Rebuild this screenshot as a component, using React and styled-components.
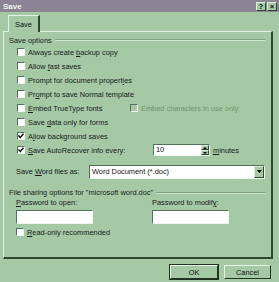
import React from "react";
import styled, { createGlobalStyle } from "styled-components";

const Global = createGlobalStyle`
  html, body { margin: 0; padding: 0; background: #a4c9a4; }
  body { font-family: "Liberation Sans", Arial, sans-serif; font-size: 7.4px; color: #1a1a1a; }
`;

const Win = styled.div`
  width: 279px;
  height: 282px;
  background: #a4c9a4;
  display: flex;
  flex-direction: column;
  overflow: hidden;
`;

const TitleBar = styled.div`
  height: 12px;
  background: #8b8494;
  display: flex;
  align-items: center;
  justify-content: space-between;
  padding: 0 2px 0 3px;
  color: #f2f2f2;
  font-weight: bold;
  font-size: 8px;
`;

const TitleBtns = styled.div`
  display: flex;
  gap: 1px;
`;

const TitleBtn = styled.div`
  width: 10px;
  height: 9px;
  background: #a4c9a4;
  border: 1px solid;
  border-color: #d8ecd8 #2f4a2f #2f4a2f #d8ecd8;
  box-sizing: border-box;
  color: #000;
  font-size: 7px;
  font-weight: bold;
  display: flex;
  align-items: center;
  justify-content: center;
  line-height: 1;
`;

const Body = styled.div`
  flex: 1;
  padding: 3px 6px 0 3px;
  display: flex;
  flex-direction: column;
`;

const Tabs = styled.div`
  display: flex;
  padding-left: 5px;
  height: 16px;
`;

const Tab = styled.div`
  width: 32px;
  border-left: 1px solid #e2f2e2;
  border-top: 1px solid #e2f2e2;
  border-right: 2px solid #2d472d;
  box-sizing: border-box;
  display: flex;
  align-items: center;
  justify-content: center;
  color: #111;
  margin-bottom: -1px;
  background: #a4c9a4;
  position: relative;
  z-index: 1;
`;

const Panel = styled.div`
  height: 228px;
  border-top: 1px solid #e2f2e2;
  border-left: 1px solid #e2f2e2;
  border-right: 2px solid #2d472d;
  border-bottom: 2px solid #2d472d;
  box-sizing: border-box;
  padding: 3px 6px 0 5px;
  display: flex;
  flex-direction: column;
`;

const Group = styled.div`
  display: flex;
  align-items: center;
  gap: 3px;
  height: ${(p) => p.$h || 10}px;
  white-space: nowrap;
  &::after {
    content: "";
    flex: 1;
    height: 0;
    border-top: 1px solid #7ea27e;
    border-bottom: 1px solid #cfe6cf;
  }
`;

const Rows = styled.div`
  display: flex;
  flex-direction: column;
  padding-left: 8px;
`;

const Row = styled.div`
  display: flex;
  align-items: center;
  height: 14px;
  gap: 3px;
`;

const Box = styled.span`
  width: 8px;
  height: 8px;
  background: ${(p) => (p.$disabled ? "#a4c9a4" : "#fff")};
  border: 1px solid;
  border-color: #52705a #eef8ee #eef8ee #52705a;
  box-sizing: border-box;
  display: inline-flex;
  align-items: center;
  justify-content: center;
  flex: none;
`;

const Label = styled.span`
  color: ${(p) => (p.$disabled ? "#6f956f" : "#1a1a1a")};
  white-space: nowrap;
  width: ${(p) => (p.$w ? `${p.$w}px` : "auto")};
  flex: none;
  u { text-decoration: underline; }
`;

const Check = ({ on, disabled }) => (
  <Box $disabled={disabled}>
    {on && (
      <svg width="6" height="6" viewBox="0 0 6 6">
        <path d="M0.5 2.5 L2.3 4.5 L5.5 0.8" stroke="#000" strokeWidth="1.4" fill="none" />
      </svg>
    )}
  </Box>
);

const Spin = styled.div`
  display: flex;
  width: 57px;
  height: 12px;
  background: #fff;
  border: 1px solid;
  border-color: #52705a #eef8ee #eef8ee #52705a;
  box-sizing: border-box;
`;

const SpinText = styled.span`
  flex: 1;
  padding-left: 2px;
  line-height: 10px;
  color: #111;
`;

const SpinBtns = styled.div`
  width: 8px;
  display: flex;
  flex-direction: column;
`;

const SpinBtn = styled.div`
  flex: 1;
  background: #a4c9a4;
  border: 1px solid;
  border-color: #d8ecd8 #2f4a2f #2f4a2f #d8ecd8;
  box-sizing: border-box;
  display: flex;
  align-items: center;
  justify-content: center;
`;

const AsRow = styled.div`
  display: flex;
  align-items: center;
  margin-top: 7px;
  padding-left: 7px;
  height: 15px;
`;

const Select = styled.div`
  width: 176px;
  height: 14px;
  background: #fff;
  border: 1px solid;
  border-color: #52705a #eef8ee #eef8ee #52705a;
  box-sizing: border-box;
  display: flex;
  align-items: center;
`;

const SelectText = styled.span`
  flex: 1;
  padding-left: 2px;
  color: #111;
`;

const DropBtn = styled.div`
  width: 10px;
  height: 12px;
  background: #a4c9a4;
  border: 1px solid;
  border-color: #d8ecd8 #2f4a2f #2f4a2f #d8ecd8;
  box-sizing: border-box;
  display: flex;
  align-items: center;
  justify-content: center;
`;

const Sharing = styled.div`
  margin-top: 8px;
`;

const PwGrid = styled.div`
  display: grid;
  grid-template-columns: 136px 1fr;
  padding-left: 7px;
`;

const PwCol = styled.div`
  display: flex;
  flex-direction: column;
`;

const Field = styled.div`
  width: ${(p) => p.$w}px;
  height: 14px;
  background: #fff;
  border: 1px solid;
  border-color: #52705a #eef8ee #eef8ee #52705a;
  box-sizing: border-box;
  margin-top: 2px;
`;

const PwLabel = styled.span`
  height: 10px;
  line-height: 10px;
  u { text-decoration: underline; }
`;

const ReadOnly = styled(Row)`
  padding-left: 7px;
  margin-top: 1px;
`;

const Footer = styled.div`
  display: flex;
  justify-content: flex-end;
  gap: 6px;
  padding: 6px 2px 0 0;
`;

const Button = styled.div`
  width: ${(p) => (p.$default ? 48 : 47)}px;
  height: 14px;
  box-sizing: border-box;
  border: 1px solid;
  border-color: #e6f4e6 #1f351f #1f351f #e6f4e6;
  outline: ${(p) => (p.$default ? "1px solid #1f351f" : "none")};
  display: flex;
  align-items: center;
  justify-content: center;
  color: #111;
`;

export default function App() {
  return (
    <Win>
      <Global />
      <TitleBar>
        <span>Save</span>
        <TitleBtns>
          <TitleBtn>?</TitleBtn>
          <TitleBtn>×</TitleBtn>
        </TitleBtns>
      </TitleBar>
      <Body>
        <Tabs>
          <Tab>Save</Tab>
        </Tabs>
        <Panel>
          <Group>Save options</Group>
          <Rows>
            <Row><Check /><Label>Always create <u>b</u>ackup copy</Label></Row>
            <Row><Check /><Label>Allow <u>f</u>ast saves</Label></Row>
            <Row><Check /><Label>Prompt for document propert<u>i</u>es</Label></Row>
            <Row><Check /><Label>Pr<u>o</u>mpt to save Normal template</Label></Row>
            <Row>
              <Check /><Label $w={99}><u>E</u>mbed TrueType fonts</Label>
              <Check disabled /><Label $disabled>Embed characters in use only</Label>
            </Row>
            <Row><Check /><Label>Save <u>d</u>ata only for forms</Label></Row>
            <Row><Check on /><Label>A<u>l</u>low background saves</Label></Row>
            <Row>
              <Check on /><Label $w={122}><u>S</u>ave AutoRecover info every:</Label>
              <Spin>
                <SpinText>10</SpinText>
                <SpinBtns>
                  <SpinBtn>
                    <svg width="4" height="2" viewBox="0 0 4 2"><path d="M0 2 L2 0 L4 2 Z" fill="#000" /></svg>
                  </SpinBtn>
                  <SpinBtn>
                    <svg width="4" height="2" viewBox="0 0 4 2"><path d="M0 0 L2 2 L4 0 Z" fill="#000" /></svg>
                  </SpinBtn>
                </SpinBtns>
              </Spin>
              <Label><u>m</u>inutes</Label>
            </Row>
          </Rows>
          <AsRow>
            <Label $w={73}>Save <u>W</u>ord files as:</Label>
            <Select>
              <SelectText>Word Document (*.doc)</SelectText>
              <DropBtn>
                <svg width="5" height="3" viewBox="0 0 5 3"><path d="M0 0 L2.5 3 L5 0 Z" fill="#000" /></svg>
              </DropBtn>
            </Select>
          </AsRow>
          <Sharing>
            <Group $h={11}>File sharing options for "microsoft word.doc"</Group>
          </Sharing>
          <PwGrid>
            <PwCol>
              <PwLabel><u>P</u>assword to open:</PwLabel>
              <Field $w={77} />
            </PwCol>
            <PwCol>
              <PwLabel>Password to modif<u>y</u>:</PwLabel>
              <Field $w={77} />
            </PwCol>
          </PwGrid>
          <ReadOnly><Check /><Label><u>R</u>ead-only recommended</Label></ReadOnly>
        </Panel>
        <Footer>
          <Button $default>OK</Button>
          <Button>Cancel</Button>
        </Footer>
      </Body>
    </Win>
  );
}
